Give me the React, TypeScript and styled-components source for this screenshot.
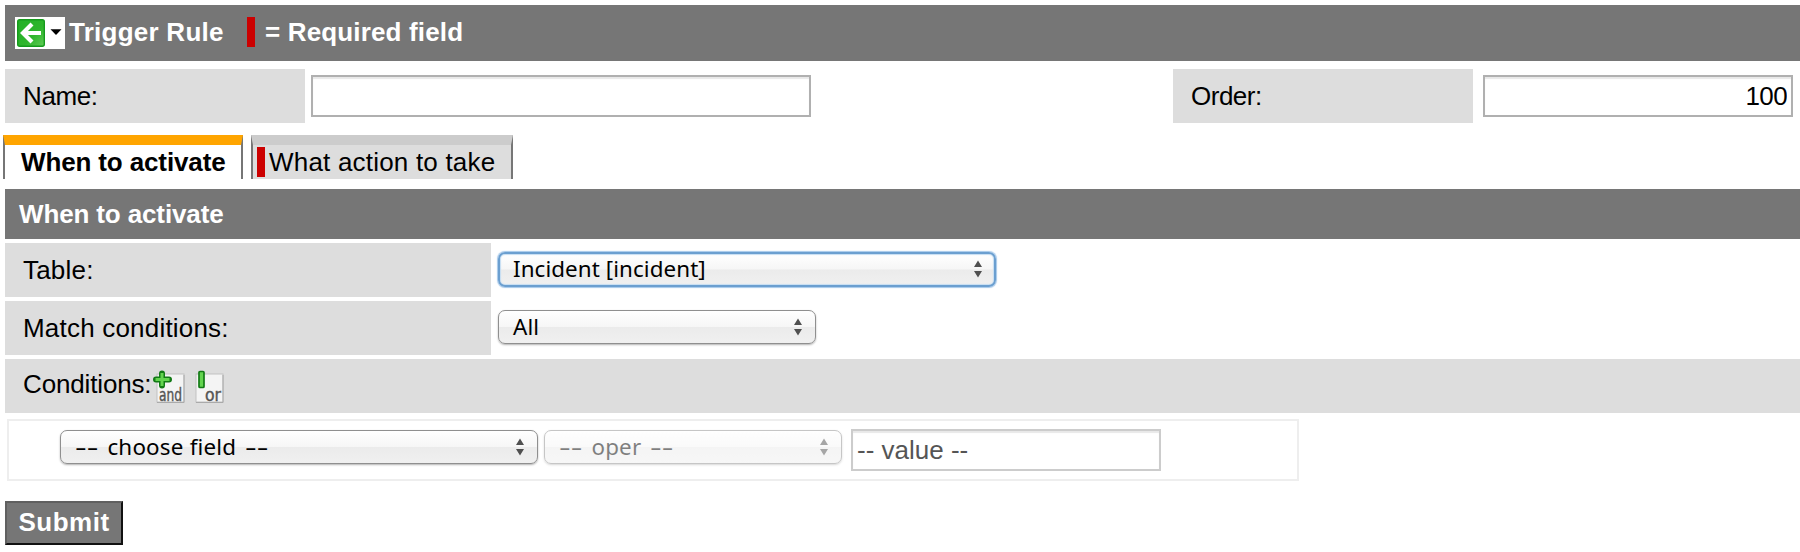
import React from "react";
import styled, { createGlobalStyle, css } from "styled-components";

const GlobalStyle = createGlobalStyle`
  * { box-sizing: border-box; }
  body {
    margin: 0;
    background: #fff;
    color: #000;
    font: 26px/30px "Liberation Sans", Arial, sans-serif;
    overflow: hidden;
  }
`;

const Page = styled.main`
  display: flex;
  flex-direction: column;
  padding: 5px 0 0 5px;
  height: 552px;
`;

const Header = styled.header`
  display: flex;
  align-items: flex-start;
  height: 56px;
  padding: 12px 0 0 10px;
  background: #767676;
  color: #fff;
  font-weight: bold;
`;

const BackButton = styled.button`
  display: flex;
  width: 50px;
  height: 32px;
  margin: 0 4px 0 0;
  padding: 0;
  border: 0;
  background: #fff;
`;

const RequiredMark = styled.span<{ $before?: number; $after: number }>`
  width: 8px;
  height: 30px;
  margin: 0 ${(p) => p.$after}px 0 ${(p) => p.$before ?? 0}px;
  background: #c00;
`;

const HeaderText = styled.span`
  white-space: nowrap;
  letter-spacing: 0.15px;
`;

const Title = styled(HeaderText)`
  width: 155px;
  letter-spacing: 0.25px;
`;

const NameOrderRow = styled.div`
  display: grid;
  grid-template-columns: 300px 500px 300px 310px;
  column-gap: 6px;
  align-items: start;
  margin-top: 8px;

  > :nth-child(3) { margin-left: 356px; width: 300px; }
  > :nth-child(4) { margin-left: 360px; }
`;

const Label = styled.label<{ $width?: string; $spacing?: number }>`
  display: flex;
  align-items: center;
  flex: none;
  width: ${(p) => p.$width ?? "300px"};
  height: 54px;
  padding: 0 0 0 18px;
  background: #ddd;
  letter-spacing: ${(p) => p.$spacing ?? 0}px;
  white-space: nowrap;
`;

const TextInput = styled.input<{ $muted?: boolean }>`
  width: ${(p) => (p.$muted ? "310px" : "100%")};
  height: 42px;
  margin: ${(p) => (p.$muted ? "0 0 0 9px" : "6px 0 0")};
  padding: 0 4px;
  border: 2px solid ${(p) => (p.$muted ? "#ccc" : "#b0b0b0")};
  outline: 0;
  background: #fff;
  box-shadow: inset 0 2px 1px #e8e8e8;
  color: ${(p) => (p.$muted ? "#555" : "#000")};
  font: inherit;
`;

const OrderInput = styled(TextInput)`
  width: 310px;
  text-align: right;
  letter-spacing: -0.6px;
`;

const Tabs = styled.nav`
  display: flex;
  gap: 8px;
  margin: 12px 0 10px -2px;
`;

const Tab = styled.div<{ $active?: boolean }>`
  display: flex;
  width: ${(p) => (p.$active ? 240 : 262)}px;
  height: 44px;
  padding: ${(p) => (p.$active ? "2px 0 0 16px" : "2px 0 0 4px")};
  border: 2px solid #767676;
  border-top: 10px solid ${(p) => (p.$active ? "#ffa500" : "#ccc")};
  border-bottom: 0;
  background: ${(p) => (p.$active ? "#fff" : "#ddd")};
  font-weight: ${(p) => (p.$active ? "bold" : "normal")};
  letter-spacing: ${(p) => (p.$active ? "-0.13px" : "0.2px")};
  white-space: nowrap;
`;

const SectionTitle = styled.h2`
  display: flex;
  align-items: center;
  height: 50px;
  margin: 0 0 4px;
  padding: 0 0 0 14px;
  background: #767676;
  color: #fff;
  font-size: 26px;
  letter-spacing: -0.13px;
`;

const FieldRow = styled.div`
  display: flex;
  align-items: flex-start;
  gap: 7px;
  height: 54px;
  margin-bottom: 4px;
`;

const Select = styled.button<{ $width: number; $top?: number; $focused?: boolean }>`
  display: flex;
  align-items: center;
  justify-content: space-between;
  flex: none;
  width: ${(p) => p.$width}px;
  height: 34px;
  margin: ${(p) => p.$top ?? 0}px 0 0;
  padding: 0 12px 1px 14px;
  border: 1px solid #8f8f8f;
  border-radius: 7px;
  background: linear-gradient(#fff 0%, #f6f6f6 49%, #ebebeb 51%, #f0f0f0 100%);
  box-shadow: 0 1px 2px rgba(0, 0, 0, 0.3);
  color: #000;
  font: 22.4px/30px "Noto Sans", sans-serif;
  letter-spacing: 0.08px;
  white-space: pre;

  ${(p) =>
    p.$focused &&
    css`
      border: 2px solid #6b9fd0;
      height: 35px;
      padding: 0 11px 1px 13px;
      box-shadow: 0 0 1px 1px #a5c8ea, inset 0 0 1px 1px #c5ddf2;
    `}

  &:disabled {
    opacity: 0.5;
  }
`;

const OptionText = styled.span`
  display: flex;
  gap: 9px;
  letter-spacing: 0.2px;
`;

const Dashes = styled.span`
  width: 14.4px;
  margin-right: 9px;
  letter-spacing: 0;
  text-align: left;
  transform: scaleX(1.62);
  transform-origin: left;
`;

const ConditionsBar = styled.div`
  display: flex;
  height: 54px;
  padding: 10px 0 0 18px;
  background: #ddd;
  letter-spacing: -0.15px;
`;

const Tiles = styled.span`
  display: flex;
  gap: 7px;
  margin: 1px 0 0 2px;
`;

const ConditionBox = styled.div`
  display: flex;
  align-items: flex-start;
  width: 1292px;
  height: 62px;
  margin: 6px 0 0 2px;
  padding: 9px 0 0 51px;
  border: 2px solid #eee;
  gap: 6px;

  ${TextInput} { margin: -1px 0 0 3px; }
`;

const Submit = styled.button`
  width: 118px;
  height: 44px;
  margin-top: 20px;
  padding: 0 0 2px;
  border: 2px solid;
  border-color: #606060 #111 #111 #606060;
  background: #767676;
  color: #fff;
  font: bold 26px/30px "Liberation Sans", Arial, sans-serif;
  letter-spacing: 0.5px;
`;

const BackIcon = () => (
  <svg width="50" height="32" viewBox="0 0 50 32">
    <defs>
      <linearGradient id="green" x1="0" y1="0" x2="1" y2="1">
        <stop offset="0" stopColor="#22b026" />
        <stop offset="0.6" stopColor="#2fb52c" />
        <stop offset="1" stopColor="#62cc58" />
      </linearGradient>
    </defs>
    <rect x="2.7" y="2.7" width="26.6" height="26.6" rx="2" fill="url(#green)" stroke="#159a1c" strokeWidth="1.4" />
    <path d="M26 16H9M17 7 8 16l9 9" fill="none" stroke="#fff" strokeWidth="4.2" />
    <path d="M35.5 12.2h11L41 18z" fill="#000" />
  </svg>
);

const Arrows = () => (
  <svg width="10" height="18" viewBox="0 0 10 18">
    <path d="M1 7 5 0.5 9 7zM1 11h8L5 17.5z" fill="#505050" />
  </svg>
);

const TileText = styled.text`
  font: 17px "DejaVu Sans Condensed", "DejaVu Sans", sans-serif;
  letter-spacing: 0;
  fill: #555;
  stroke: #555;
  stroke-width: 0.4px;
`;

const AndIcon = () => (
  <svg width="34" height="34" viewBox="0 0 34 34">
    <rect x="4" y="4" width="27" height="28" fill="#f4f4f4" stroke="#c2c2c2" />
    <path d="M4 32.5h27V5" fill="none" stroke="#aaa" />
    <path d="M9 3.5v12M3 9.5h13" stroke="#137a16" strokeWidth="6" strokeLinecap="round" />
    <path d="M9 3v13M2.5 9.5h14" stroke="#63d44f" strokeWidth="3" />
    <TileText x="6" y="31" textLength="23" lengthAdjust="spacingAndGlyphs">and</TileText>
  </svg>
);

const OrIcon = () => (
  <svg width="34" height="34" viewBox="0 0 34 34">
    <rect x="2" y="4" width="27" height="28" fill="#f4f4f4" stroke="#c2c2c2" />
    <path d="M2 32.5h27V5" fill="none" stroke="#aaa" />
    <rect x="5" y="1.5" width="5" height="16" rx="1" fill="#63d44f" stroke="#137a16" strokeWidth="1.7" />
    <TileText x="11" y="31" textLength="16" lengthAdjust="spacingAndGlyphs">or</TileText>
  </svg>
);

export default function App() {
  return (
    <>
      <GlobalStyle />
      <Page>
        <Header>
          <BackButton aria-label="Back"><BackIcon /></BackButton>
          <Title>Trigger Rule</Title>
          <RequiredMark $before={23} $after={10} />
          <HeaderText>= Required field</HeaderText>
        </Header>
        <NameOrderRow>
          <Label $spacing={-0.4}>Name:</Label>
          <TextInput />
          <Label $spacing={-0.5}>Order:</Label>
          <OrderInput defaultValue="100" />
        </NameOrderRow>
        <Tabs>
          <Tab $active>When to activate</Tab>
          <Tab><RequiredMark $after={4} />What action to take</Tab>
        </Tabs>
        <SectionTitle>When to activate</SectionTitle>
        <FieldRow>
          <Label $width="486px" $spacing={0.2}>Table:</Label>
          <Select $width={498} $top={9} $focused>Incident [incident]<Arrows /></Select>
        </FieldRow>
        <FieldRow>
          <Label $width="486px" $spacing={0.2}>Match conditions:</Label>
          <Select $width={318} $top={9}>All<Arrows /></Select>
        </FieldRow>
        <ConditionsBar>
          Conditions:
          <Tiles><AndIcon /><OrIcon /></Tiles>
        </ConditionsBar>
        <ConditionBox>
          <Select $width={478}>
            <OptionText><Dashes>--</Dashes>choose field<Dashes>--</Dashes></OptionText><Arrows />
          </Select>
          <Select $width={298} disabled>
            <OptionText><Dashes>--</Dashes>oper<Dashes>--</Dashes></OptionText><Arrows />
          </Select>
          <TextInput $muted defaultValue="-- value --" />
        </ConditionBox>
        <Submit>Submit</Submit>
      </Page>
    </>
  );
}
